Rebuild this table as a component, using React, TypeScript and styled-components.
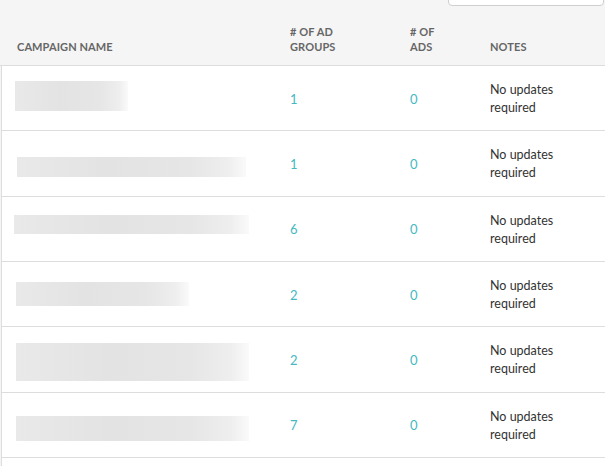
import React from "react";
import styled, { createGlobalStyle } from "styled-components";

const Global = createGlobalStyle`
  html, body { margin: 0; padding: 0; background: #ffffff; }
  body { font-family: Lato, "Open Sans", sans-serif; color: #333; }
`;

const Page = styled.div`
  width: 605px;
  height: 466px;
  overflow: hidden;
  background: #f5f5f5;
`;

const Toolbar = styled.div`
  height: 6px;
  display: flex;
  justify-content: flex-end;
  align-items: flex-end;
  overflow: hidden;
  padding-right: 1px;
`;

const Search = styled.div`
  width: 156px;
  height: 30px;
  box-sizing: border-box;
  border: 1px solid #cfcfcf;
  border-radius: 4px;
  background: #fff;
`;

const cols = "288px 120px 80px 1fr";

const HeadRow = styled.div`
  display: grid;
  grid-template-columns: ${cols};
  align-items: end;
  height: 60px;
  box-sizing: border-box;
  padding: 0 0 11px 2px;
  border-bottom: 1px solid #dddddd;
`;

const HeadCell = styled.div<{ $pl?: number }>`
  padding-left: ${(p) => p.$pl ?? 0}px;
  font-size: 11px;
  line-height: 15px;
  font-weight: 700;
  letter-spacing: 0.1px;
  text-transform: uppercase;
  color: #666666;
`;

const Body = styled.div`
  margin-left: 1px;
  border-left: 1px solid #dddddd;
  background: #fff;
`;

const Row = styled.div`
  display: grid;
  grid-template-columns: ${cols};
  align-items: center;
  height: 65.33px;
  box-sizing: border-box;
  border-bottom: 1px solid #dddddd;
`;

const NameCell = styled.div`
  padding-left: 15px;
  display: flex;
  align-items: center;
`;

const Blur = styled.div<{ $w: number; $h: number; $dx: number; $dy: number }>`
  width: ${(p) => p.$w}px;
  height: ${(p) => p.$h}px;
  margin-left: ${(p) => p.$dx}px;
  margin-top: ${(p) => p.$dy * 2}px;
  background: linear-gradient(
    90deg,
    #e9e9e9 0%,
    #e3e3e3 40%,
    #e6e6e6 75%,
    #eeeeee 92%,
    #fafafa 100%
  );
  filter: blur(0.4px);
`;

const Num = styled.div`
  font-size: 13px;
  color: #45b8c1;
  padding-top: 1px;
`;

const Note = styled.div`
  font-size: 12.5px;
  line-height: 18px;
  color: #333;
  padding-top: 2px;
`;

const rows = [
  { w: 113, h: 30, dx: -2, dy: -2, groups: 1, ads: 0 },
  { w: 229, h: 20, dx: 0, dy: 4, groups: 1, ads: 0 },
  { w: 235, h: 19, dx: -3, dy: -4, groups: 6, ads: 0 },
  { w: 173, h: 24, dx: -1, dy: 0, groups: 2, ads: 0 },
  { w: 233, h: 38, dx: -1, dy: 3, groups: 2, ads: 0 },
  { w: 233, h: 25, dx: -1, dy: 4, groups: 7, ads: 0 },
];

export default function App() {
  return (
    <>
      <Global />
      <Page>
        <Toolbar>
          <Search />
        </Toolbar>
        <HeadRow>
          <HeadCell $pl={15}>Campaign Name</HeadCell>
          <HeadCell>
            # of ad
            <br />
            groups
          </HeadCell>
          <HeadCell>
            # of
            <br />
            ads
          </HeadCell>
          <HeadCell>Notes</HeadCell>
        </HeadRow>
        <Body>
          {rows.map((r, i) => (
            <Row key={i}>
              <NameCell>
                <Blur $w={r.w} $h={r.h} $dx={r.dx} $dy={r.dy} />
              </NameCell>
              <Num>{r.groups}</Num>
              <Num>{r.ads}</Num>
              <Note>
                No updates
                <br />
                required
              </Note>
            </Row>
          ))}
          <Row />
        </Body>
      </Page>
    </>
  );
}
